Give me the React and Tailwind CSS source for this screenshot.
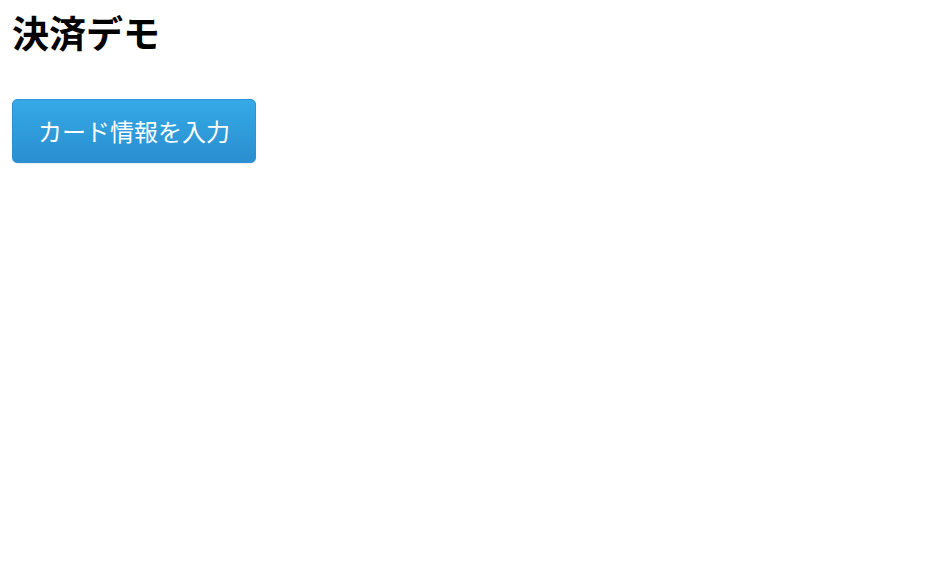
export default function App() {
  return (
    <div className="min-h-[584px] bg-white px-3" style={{ fontFamily: '"Noto Sans CJK JP", "Noto Sans", sans-serif' }}>
      <h1 className="pt-[7px] text-[37px] font-bold leading-[50px] text-black">決済デモ</h1>
      <button
        type="button"
        className="mt-[42px] flex h-[64px] w-[244px] items-center justify-center rounded-[5px] border border-[#2a92d6] bg-gradient-to-b from-[#35aae6] to-[#2a8ecf] text-[24px] font-normal text-white shadow-[0_1px_1px_rgba(0,0,0,0.08)]"
      >
        カード情報を入力
      </button>
    </div>
  );
}
